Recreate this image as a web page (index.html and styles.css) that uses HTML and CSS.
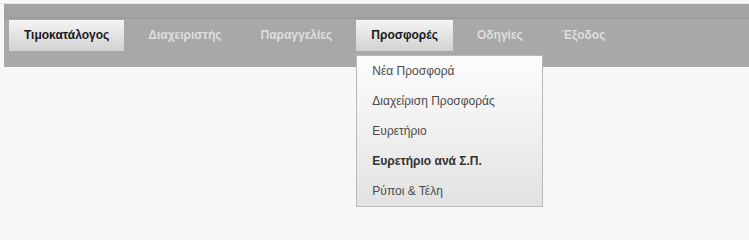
FILE: index.html
```html
<!DOCTYPE html>
<html lang="el">
<head>
<meta charset="utf-8">
<link rel="stylesheet" href="styles.css">
</head>
<body>
<div class="page">
  <div class="topline"></div>
  <nav class="menubar">
    <ul class="menu">
      <li class="item active"><a href="#">Τιμοκατάλογος</a></li>
      <li class="item"><a href="#">Διαχειριστής</a></li>
      <li class="item"><a href="#">Παραγγελίες</a></li>
      <li class="item active open"><a href="#">Προσφορές</a>
        <ul class="dropdown">
          <li><a href="#">Νέα Προσφορά</a></li>
          <li><a href="#">Διαχείριση Προσφοράς</a></li>
          <li><a href="#">Ευρετήριο</a></li>
          <li class="hover"><a href="#">Ευρετήριο ανά Σ.Π.</a></li>
          <li><a href="#">Ρύποι &amp; Τέλη</a></li>
        </ul>
      </li>
      <li class="item"><a href="#">Οδηγίες</a></li>
      <li class="item"><a href="#">Έξοδος</a></li>
    </ul>
  </nav>
</div>
</body>
</html>
```

FILE: styles.css
```css
html, body {
  margin: 0;
  padding: 0;
  background: #f7f7f7;
  font-family: "Liberation Sans", Arial, sans-serif;
  font-size: 12px;
}
.page {
  min-height: 225px;
}
.topline {
  height: 3px;
  border-bottom: 1px solid #e6e6e6;
  background: #f7f7f7;
}
.menubar {
  position: relative;
  z-index: 5;
  margin-left: 4px;
  padding: 16px 0 16px 5px;
  background: linear-gradient(#a3a3a3 0, #a3a3a3 13px, #9d9d9d 13px, #9d9d9d 15px, #a8a8a8 15px);
}
.menu {
  list-style: none;
  margin: 0;
  padding: 0;
  display: flex;
  gap: 9px;
}
.item {
  position: relative;
}
.item > a {
  display: block;
  padding: 0 15px;
  line-height: 31px;
  font-weight: bold;
  color: #dedede;
  text-decoration: none;
}
.item.active > a {
  color: #1a1a1a;
  background: linear-gradient(#f4f4f4, #d2d2d2);
}
.dropdown {
  position: absolute;
  z-index: 10;
  top: 35px;
  left: 0;
  width: 185px;
  margin: 0;
  padding: 0;
  list-style: none;
  border: 1px solid #b9b9b9;
  background: linear-gradient(#fdfdfd, #e2e2e2);
}
.dropdown li a {
  display: block;
  height: 30px;
  line-height: 30px;
  padding-left: 15px;
  color: #4a4a4a;
  text-decoration: none;
  white-space: nowrap;
}
.dropdown li.hover a {
  font-weight: bold;
  color: #333;
}
```
